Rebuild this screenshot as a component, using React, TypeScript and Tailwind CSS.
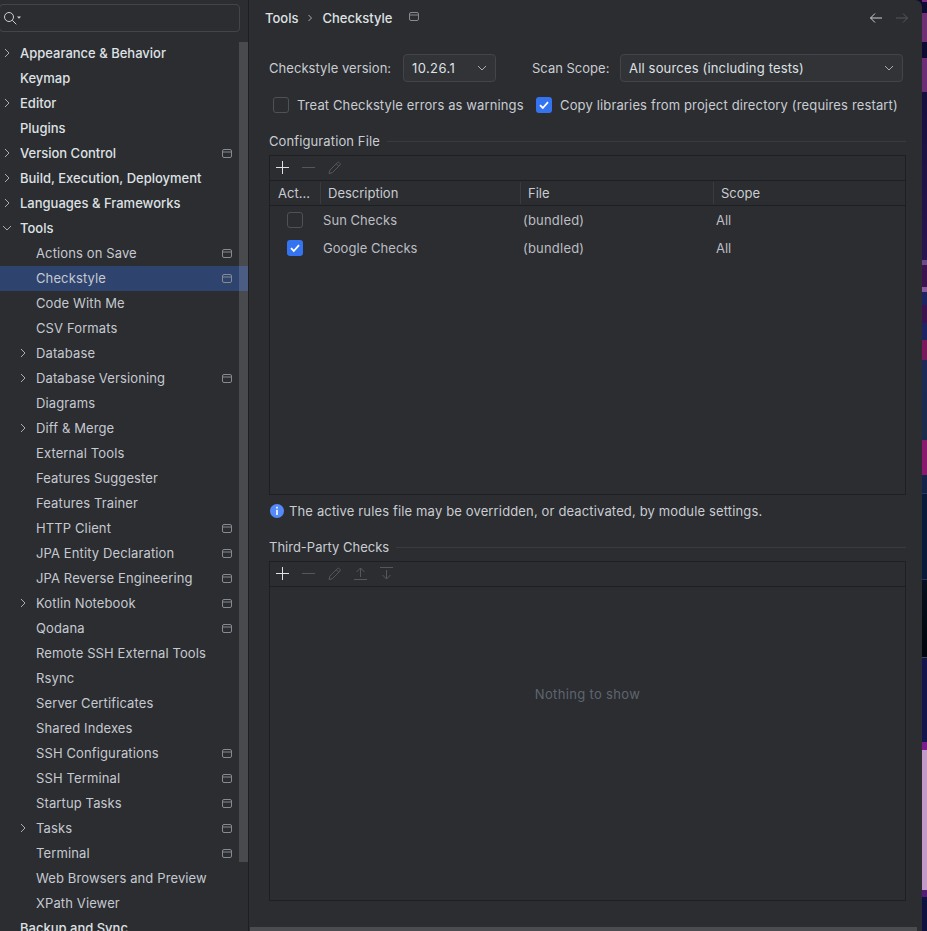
import type { ReactNode } from "react";

type TreeItem = {
  label: string;
  top?: boolean;
  arrow?: "right" | "down";
  pane?: boolean;
  selected?: boolean;
};

const TREE: TreeItem[] = [
  { label: "Appearance & Behavior", top: true, arrow: "right" },
  { label: "Keymap", top: true },
  { label: "Editor", top: true, arrow: "right" },
  { label: "Plugins", top: true },
  { label: "Version Control", top: true, arrow: "right", pane: true },
  { label: "Build, Execution, Deployment", top: true, arrow: "right" },
  { label: "Languages & Frameworks", top: true, arrow: "right" },
  { label: "Tools", top: true, arrow: "down" },
  { label: "Actions on Save", pane: true },
  { label: "Checkstyle", pane: true, selected: true },
  { label: "Code With Me" },
  { label: "CSV Formats" },
  { label: "Database", arrow: "right" },
  { label: "Database Versioning", arrow: "right", pane: true },
  { label: "Diagrams" },
  { label: "Diff & Merge", arrow: "right" },
  { label: "External Tools" },
  { label: "Features Suggester" },
  { label: "Features Trainer" },
  { label: "HTTP Client", pane: true },
  { label: "JPA Entity Declaration", pane: true },
  { label: "JPA Reverse Engineering", pane: true },
  { label: "Kotlin Notebook", arrow: "right", pane: true },
  { label: "Qodana", pane: true },
  { label: "Remote SSH External Tools" },
  { label: "Rsync" },
  { label: "Server Certificates" },
  { label: "Shared Indexes" },
  { label: "SSH Configurations", pane: true },
  { label: "SSH Terminal", pane: true },
  { label: "Startup Tasks", pane: true },
  { label: "Tasks", arrow: "right", pane: true },
  { label: "Terminal", pane: true },
  { label: "Web Browsers and Preview" },
  { label: "XPath Viewer" },
  { label: "Backup and Sync", top: true },
];

function PaneIcon() {
  return (
    <svg width="10" height="9" viewBox="0 0 10 9" fill="none" stroke="#868a91" strokeWidth="1">
      <rect x="0.5" y="0.5" width="9" height="8" rx="1.5" />
      <path d="M0.5 3h9" />
    </svg>
  );
}

function Chevron({ dir = "right" }: { dir?: "right" | "down" }) {
  return (
    <svg width="10" height="10" viewBox="0 0 10 10" fill="none" stroke="#a8adb5" strokeWidth="1">
      {dir === "right" ? <path d="M3 1l4 4-4 4" /> : <path d="M1 3l4 4 4-4" />}
    </svg>
  );
}

function Check({ on = false }: { on?: boolean }) {
  return on ? (
    <span className="flex h-4 w-4 shrink-0 items-center justify-center rounded-[3px] bg-[#3574f0]">
      <svg width="12" height="12" viewBox="0 0 12 12" fill="none" stroke="#ffffff" strokeWidth="1.8">
        <path d="M2 6.2l2.8 2.8L10 3.2" />
      </svg>
    </span>
  ) : (
    <span className="h-4 w-4 shrink-0 rounded-[3px] border border-[#4e5157] bg-[#2b2d30]" />
  );
}

function Select({ width, children }: { width: string; children: ReactNode }) {
  return (
    <div className={`flex h-[28px] items-center justify-between rounded-[4px] border border-[#43454a] bg-[#313337] pl-[8px] pr-[8px] ${width}`}>
      <span className="text-[#dfe1e5]">{children}</span>
      <Chevron dir="down" />
    </div>
  );
}

function Section({ title, tracking }: { title: string; tracking: string }) {
  return (
    <div className="flex h-4 items-center gap-[7px] text-[#c9ccd2]">
      <span className={`whitespace-nowrap ${tracking}`}>{title}</span>
      <div className="mt-[1px] h-px flex-1 bg-[#393b40]" />
    </div>
  );
}

function ToolIcon({ children }: { children: ReactNode }) {
  return (
    <span className="flex h-full w-[26px] items-center justify-center">
      <svg width="16" height="16" viewBox="0 0 16 16" fill="none" stroke="#55575c" strokeWidth="1">
        {children}
      </svg>
    </span>
  );
}

function Toolbar({ arrows = false }: { arrows?: boolean }) {
  return (
    <div className="flex h-[25px] shrink-0 items-center border-b border-[#1e1f22]">
      <span className="flex h-full w-[26px] items-center justify-center">
        <svg width="16" height="16" viewBox="0 0 16 16" fill="none" stroke="#dfe1e5" strokeWidth="1">
          <path d="M7.5 1v13M1 7.5h13" />
        </svg>
      </span>
      <ToolIcon>
        <path d="M1 7.5h13" />
      </ToolIcon>
      <ToolIcon>
        <path d="M2 13.5l.8-3.3 7.6-7.6a1.3 1.3 0 0 1 1.9 0l.6.6a1.3 1.3 0 0 1 0 1.9l-7.6 7.6z" />
        <path d="M9.3 3.8l2.4 2.4" />
      </ToolIcon>
      {arrows && (
        <>
          <ToolIcon>
            <path d="M1 13.5h13M7.5 11V2M3.5 6L7.5 2l4 4" />
          </ToolIcon>
          <ToolIcon>
            <path d="M1 1.5h13M7.5 4v9M3.5 9l4 4 4-4" />
          </ToolIcon>
        </>
      )}
    </div>
  );
}

function Sidebar() {
  return (
    <aside className="relative flex h-full w-[249px] shrink-0 flex-col overflow-hidden border-r border-[#1e1f22]">
      <div className="shrink-0 pt-[4px]">
        <div className="-ml-px flex h-[28px] w-[241px] items-center rounded-[4px] border border-[#43454a] pl-[2px]">
          <svg width="21" height="16" viewBox="0 0 21 16" fill="none" stroke="#ced0d6" strokeWidth="1">
            <circle cx="7" cy="7" r="4.5" />
            <path d="M10.3 10.3l4 4" />
            <path d="M15 6.5h4l-2 2.2z" fill="#ced0d6" stroke="none" />
          </svg>
        </div>
      </div>
      <div className="mt-[9px] shrink-0">
        {TREE.map((item) => (
          <div
            key={item.label}
            className={`flex h-[25px] items-center pr-[16px] ${item.selected ? "bg-[#2e436e]" : ""} ${item.top ? "pl-[20px] font-medium text-[#dfe1e5]" : "pl-[36px] tracking-[0.12px] text-[#c6c9d0]"}`}
          >
            <span className="relative -mt-[1px] flex-1 whitespace-nowrap">
              {item.arrow && (
                <span className="absolute -left-[18px] top-[3px]">
                  <Chevron dir={item.arrow} />
                </span>
              )}
              {item.label}
            </span>
            {item.pane && <PaneIcon />}
          </div>
        ))}
      </div>
      {/* overlay scrollbar */}
      <div className="absolute left-[239px] top-[42px] h-[820px] w-[9px] bg-[rgba(255,255,255,0.14)]" />
    </aside>
  );
}

function ConfigTable() {
  return (
    <div className="mt-[6px] flex h-[340px] flex-col border border-[#1e1f22]">
      <Toolbar />
      <div className="flex h-[25px] shrink-0 items-center border-b border-[#1e1f22] text-[#c9ccd2]">
        <div className="flex h-[22px] w-[51px] items-center border-r border-[#393b40] pl-[8px]">Act...</div>
        <div className="flex h-[22px] w-[200px] items-center border-r border-[#393b40] pl-[7px]">Description</div>
        <div className="flex h-[22px] w-[193px] items-center border-r border-[#393b40] pl-[7px]">File</div>
        <div className="flex h-[22px] items-center pl-[7px]">Scope</div>
      </div>
      {[
        { name: "Sun Checks", on: false },
        { name: "Google Checks", on: true },
      ].map((row) => (
        <div key={row.name} className="flex h-[28px] shrink-0 items-center text-[#bcbec4]">
          <div className="flex w-[51px] justify-center pr-px">
            <Check on={row.on} />
          </div>
          <div className="w-[200px] pl-[2px] tracking-[0.05px]">{row.name}</div>
          <div className="w-[193px] pl-[2px] tracking-[0.2px]">(bundled)</div>
          <div className="pl-[2px]">All</div>
        </div>
      ))}
    </div>
  );
}

function Content() {
  return (
    <main className="flex min-w-0 flex-1 flex-col">
      <div className="flex h-[35px] shrink-0 items-center pl-[16px] pr-[12px] font-medium text-[#dfe1e5]">
        <span>Tools</span>
        <svg className="mx-[9px]" width="6" height="8" viewBox="0 0 6 8" fill="none" stroke="#a8adb5" strokeWidth="1">
          <path d="M1.5 1l3 3-3 3" />
        </svg>
        <span>Checkstyle</span>
        <span className="ml-[17px] mt-[-2px] flex">
          <PaneIcon />
        </span>
        <span className="ml-auto flex items-center gap-[10px]">
          <svg width="16" height="16" viewBox="0 0 16 16" fill="none" stroke="#ced0d6" strokeWidth="1">
            <path d="M14 8H2.5M7 3.5L2.5 8 7 12.5" />
          </svg>
          <svg width="16" height="16" viewBox="0 0 16 16" fill="none" stroke="#55575c" strokeWidth="1">
            <path d="M2 8h11.5M9 3.5L13.5 8 9 12.5" />
          </svg>
        </span>
      </div>
      <div className="flex flex-1 flex-col pl-[20px] pr-[16px] pt-[19px]">
        <div className="flex h-[28px] items-center text-[#c9ccd2]">
          <span className="-mt-px w-[134px] tracking-[0.05px]">Checkstyle version:</span>
          <Select width="w-[93px] tracking-[0.4px]">10.26.1</Select>
          <span className="-mt-px ml-[36px] w-[88px]">Scan Scope:</span>
          <Select width="w-[283px] tracking-[0.17px]">All sources (including tests)</Select>
        </div>
        <div className="mt-[15px] flex h-4 items-center pl-[4px] tracking-[0.12px] text-[#c9ccd2]">
          <Check />
          <span className="ml-[8px] w-[239px] whitespace-nowrap">Treat Checkstyle errors as warnings</span>
          <Check on />
          <span className="ml-[8px] whitespace-nowrap tracking-[0.145px]">Copy libraries from project directory (requires restart)</span>
        </div>
        <div className="mt-[20px]">
          <Section title="Configuration File" tracking="tracking-[0.11px]" />
        </div>
        <ConfigTable />
        <div className="mt-[8px] flex h-4 items-center gap-[5px] pl-px tracking-[0.145px] text-[#c9ccd2]">
          <svg width="14" height="14" viewBox="0 0 14 14">
            <circle cx="7" cy="7" r="7" fill="#548af7" />
            <rect x="6.2" y="2.8" width="1.6" height="1.7" fill="#ffffff" />
            <rect x="6.2" y="5.8" width="1.6" height="5.2" fill="#ffffff" />
          </svg>
          <span>The active rules file may be overridden, or deactivated, by module settings.</span>
        </div>
        <div className="mt-[20px]">
          <Section title="Third-Party Checks" tracking="" />
        </div>
        <div className="mt-[6px] flex h-[340px] flex-col border border-[#1e1f22]">
          <Toolbar arrows />
          <div className="flex flex-1 items-center justify-center pb-[100px] tracking-[0.33px] text-[#5f6570]">Nothing to show</div>
        </div>
      </div>
      <div className="ml-px mr-[5px] h-[4px] shrink-0 bg-[#4b4c4f]" />
    </main>
  );
}

// slice of desktop wallpaper visible to the right of the dialog
function Wallpaper() {
  return (
    <div className="flex h-full w-[5px] shrink-0 flex-col">
      <div className="h-[2px] bg-[#7a2a80]" />
      <div className="h-[11px] bg-[#0d0b33]" />
      <div className="h-[29px] bg-[#6e2f74]" />
      <div className="h-[16px] bg-[#0d0b33]" />
      <div className="h-[34px] bg-[#6c2d76]" />
      <div className="h-[168px] bg-gradient-to-b from-[#14103f] to-[#2a1450]" />
      <div className="h-[5px] bg-[#6a4a8a]" />
      <div className="h-[22px] bg-[#3c1250]" />
      <div className="h-[5px] bg-[#8a5a9a]" />
      <div className="h-[13px] bg-[#1c2463]" />
      <div className="h-[18px] bg-[#3c1250]" />
      <div className="h-[17px] bg-[#1c2463]" />
      <div className="h-[20px] bg-[#7a1a5c]" />
      <div className="h-[80px] bg-gradient-to-b from-[#1b2a5a] to-[#1a2b4a]" />
      <div className="h-[35px] bg-[#8a1a70]" />
      <div className="h-[18px] bg-[#13234a]" />
      <div className="h-px bg-[#2a3a5a]" />
      <div className="h-[85px] bg-[#0a1a3a]" />
      <div className="h-px bg-[#2a3a5a]" />
      <div className="h-[77px] bg-gradient-to-b from-[#06111f] to-[#01060c]" />
      <div className="h-px bg-[#3a4a5a]" />
      <div className="h-[84px] bg-[#14154c]" />
      <div className="h-[8px] bg-[#7a1c8c]" />
      <div className="h-[140px] bg-[#c59ac8]" />
      <div className="h-[7px] bg-[#561a78]" />
      <div className="flex-1 bg-[#0e1240]" />
    </div>
  );
}

export default function App() {
  return (
    <div className="flex h-[931px] w-[927px] overflow-hidden bg-[#0d0b33] font-[family-name:Inter,sans-serif] text-[13px] leading-4">
      <div className="flex h-full w-[922px] shrink-0 overflow-hidden rounded-tr-[7px] bg-[#2b2d30]">
        <Sidebar />
        <Content />
      </div>
      <Wallpaper />
    </div>
  );
}
